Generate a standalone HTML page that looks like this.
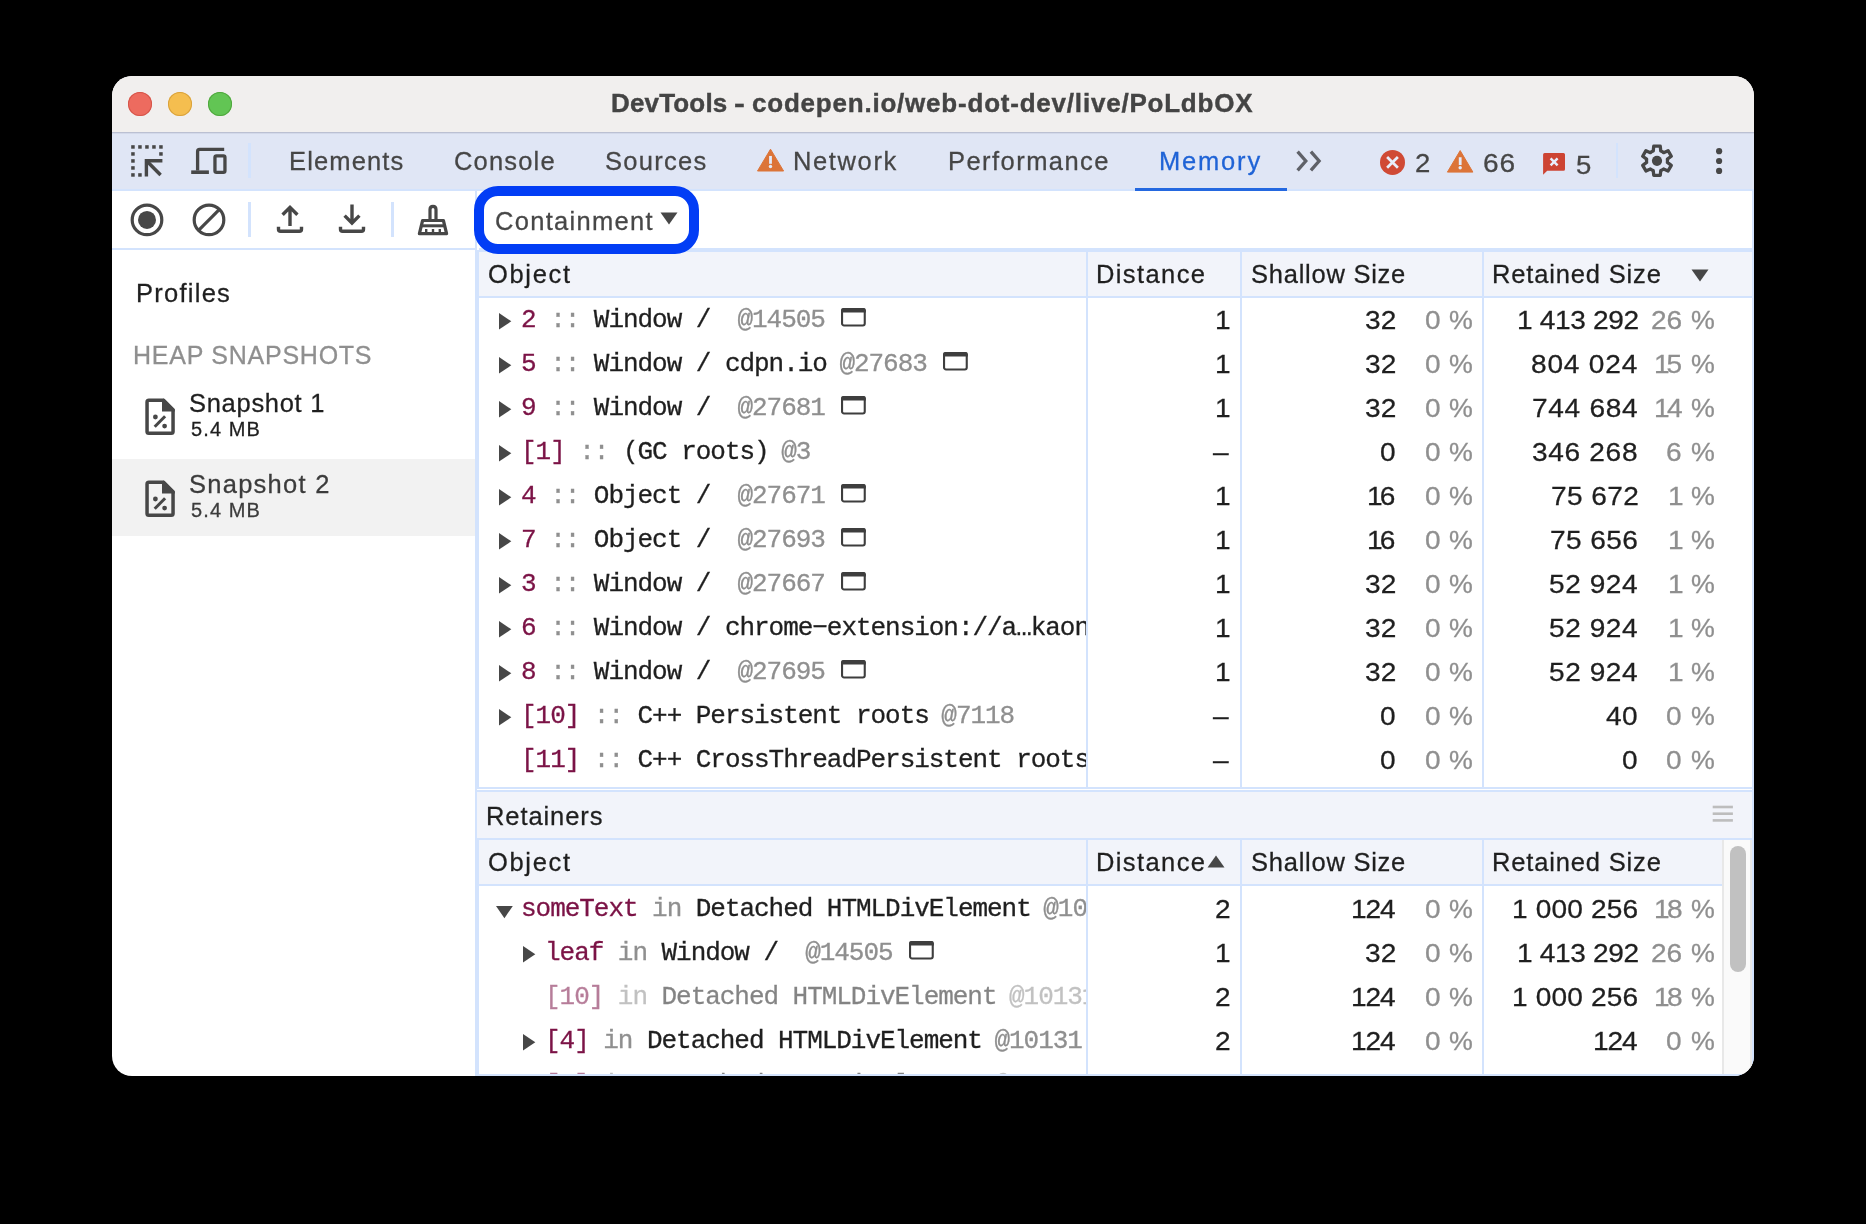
<!DOCTYPE html>
<html><head><meta charset="utf-8"><title>DevTools</title>
<style>
html,body{margin:0;padding:0;background:#000;}
body{width:1866px;height:1224px;position:relative;overflow:hidden;font-family:"Liberation Sans", sans-serif;}
#win{position:absolute;left:0;top:0;width:1866px;height:1224px;clip-path:inset(76px 112px 148px 112px round 20px);background:#fff;}
.r{position:absolute;}
.i{position:absolute;overflow:visible;}
.t{position:absolute;white-space:pre;line-height:1;display:block;will-change:transform;}
.s{font-family:"Liberation Sans", sans-serif;-webkit-text-stroke:0.28px;}
.m{font-family:"Liberation Mono", monospace;}
.clip{position:absolute;overflow:hidden;}
</style></head>
<body><div id="win">
<div class="r" style="left:112px;top:76px;width:1642px;height:56px;background:#f1efee;"></div>
<div class="r" style="left:112px;top:132px;width:1642px;height:1px;background:#bbc0d2;"></div>
<div class="r" style="left:112px;top:133px;width:1642px;height:1px;background:#d3d9ea;"></div>
<div class="r" style="left:128px;top:92px;width:24px;height:24px;border-radius:50%;background:#ed6b5f;box-shadow:inset 0 0 0 1px #d5554a;"></div>
<div class="r" style="left:168px;top:92px;width:24px;height:24px;border-radius:50%;background:#f5be4f;box-shadow:inset 0 0 0 1px #d9a23c;"></div>
<div class="r" style="left:208px;top:92px;width:24px;height:24px;border-radius:50%;background:#62c554;box-shadow:inset 0 0 0 1px #50a73e;"></div>
<span class="t s" style="top:90px;font-size:26px;color:#444;font-weight:700;letter-spacing:0.166px;left:610.60px;-webkit-text-stroke:0.4px;">DevTools</span>
<span class="t s" style="top:90px;font-size:26px;color:#444;font-weight:700;left:734.45px;-webkit-text-stroke:0.4px;transform:scaleX(1.25);transform-origin:0 0;">-</span>
<span class="t s" style="top:90px;font-size:26px;color:#444;font-weight:700;letter-spacing:0.786px;left:751.60px;-webkit-text-stroke:0.4px;">codepen.io/web-dot-dev/live/PoLdbOX</span>
<div class="r" style="left:112px;top:134px;width:1642px;height:55px;background:#e0e6f5;"></div>
<div class="r" style="left:112px;top:189px;width:1642px;height:2px;background:#d3e3fd;"></div>
<div class="r" style="left:248.4px;top:143px;width:2.5999999999999943px;height:35px;background:#d3e3fd;"></div>
<div class="r" style="left:1615.6px;top:143px;width:2.6000000000001364px;height:35px;background:#d3e3fd;"></div>
<span class="t s" style="top:149px;font-size:25.5px;color:#464646;letter-spacing:1.136px;left:288.70px;">Elements</span>
<span class="t s" style="top:149px;font-size:25.5px;color:#464646;letter-spacing:1.171px;left:454.20px;">Console</span>
<span class="t s" style="top:149px;font-size:25.5px;color:#464646;letter-spacing:1.267px;left:605.40px;">Sources</span>
<span class="t s" style="top:149px;font-size:25.5px;color:#464646;letter-spacing:1.622px;left:792.90px;">Network</span>
<span class="t s" style="top:149px;font-size:25.5px;color:#464646;letter-spacing:1.45px;left:948.00px;">Performance</span>
<span class="t s" style="top:149px;font-size:25.5px;color:#1f63d6;letter-spacing:1.812px;left:1158.80px;">Memory</span>
<div class="r" style="left:1135px;top:188px;width:152px;height:3px;background:#2468e0;"></div>
<span class="t s" style="top:151px;font-size:25.5px;color:#464646;left:1415.12px;transform:scaleX(1.08);transform-origin:0 0;">2</span>
<span class="t s" style="top:151px;font-size:25.5px;color:#464646;letter-spacing:0.909px;left:1482.60px;transform:scaleX(1.1);transform-origin:0 0;">66</span>
<span class="t s" style="top:153px;font-size:25.5px;color:#464646;left:1575.72px;transform:scaleX(1.08);transform-origin:0 0;">5</span>
<div class="r" style="left:112px;top:191px;width:1642px;height:57px;background:#fff;"></div>
<div class="r" style="left:112px;top:248px;width:363px;height:2px;background:#d3e3fd;"></div>
<div class="r" style="left:248.4px;top:202px;width:2.5999999999999943px;height:35px;background:#d3e3fd;"></div>
<div class="r" style="left:391.2px;top:202px;width:2.6000000000000227px;height:35px;background:#d3e3fd;"></div>
<div class="r" style="left:475px;top:191px;width:2px;height:59px;background:#d3e3fd;"></div>
<div class="r" style="left:475px;top:250px;width:4px;height:826px;background:#d3e3fd;"></div>
<span class="t s" style="top:281px;font-size:25.5px;color:#1f1f1f;letter-spacing:1.26px;left:135.50px;">Profiles</span>
<span class="t s" style="top:343px;font-size:25px;color:#8f8f8f;letter-spacing:0.75px;left:132.70px;">HEAP SNAPSHOTS</span>
<div class="r" style="left:112px;top:459px;width:363px;height:77px;background:#f2f2f2;"></div>
<span class="t s" style="top:391px;font-size:25.5px;color:#1f1f1f;letter-spacing:0.707px;left:189.30px;">Snapshot 1</span>
<span class="t s" style="top:419px;font-size:20px;color:#1f1f1f;letter-spacing:1.116px;left:190.70px;">5.4 MB</span>
<span class="t s" style="top:472px;font-size:25.5px;color:#3c3c3c;letter-spacing:1.263px;left:189.30px;">Snapshot 2</span>
<span class="t s" style="top:500px;font-size:20px;color:#3c3c3c;letter-spacing:1.116px;left:190.70px;">5.4 MB</span>
<div class="r" style="left:479px;top:248px;width:1275px;height:4px;background:#d3e3fd;"></div>
<div class="r" style="left:479px;top:252px;width:1273px;height:44px;background:#f2f4fa;"></div>
<span class="t s" style="top:262px;font-size:25.5px;color:#1f1f1f;letter-spacing:1.657px;left:487.90px;">Object</span>
<span class="t s" style="top:262px;font-size:25.5px;color:#1f1f1f;letter-spacing:1.396px;left:1096.20px;">Distance</span>
<span class="t s" style="top:262px;font-size:25.5px;color:#1f1f1f;letter-spacing:0.754px;left:1251.40px;">Shallow Size</span>
<span class="t s" style="top:262px;font-size:25.5px;color:#1f1f1f;letter-spacing:0.843px;left:1492.30px;">Retained Size</span>
<div class="r" style="left:479px;top:296px;width:1275px;height:2px;background:#d3e3fd;"></div>
<svg class="i" style="left:1691px;top:269px;" width="18" height="13" viewBox="0 0 18 13"><path d="M0.5 0.5H17.5L9 12.5Z" fill="#474747"/></svg>
<svg class="i" style="left:498.8px;top:313.4px;" width="13" height="17" viewBox="0 0 13 17"><path d="M0 0L12.3 8.3L0 16.6Z" fill="#474747"/></svg>
<div class="clip" style="left:479px;top:298px;width:607px;height:44px;"><span class="t m" style="left:42.30px;top:9px;font-size:26px;letter-spacing:-1.04px;-webkit-text-stroke:0.3px;"><span style="color:#7b1346">2</span><span style="color:#8f8f8f"> :: </span><span style="color:#1f1f1f">Window /  </span><span style="color:#8f8f8f;margin-left:-2px">@14505</span></span></div>
<svg class="i" style="left:841.3199999999999px;top:308.1px;" width="25" height="19" viewBox="0 0 25 19"><rect x="1.05" y="1.05" width="22.7" height="16.4" rx="2" fill="none" stroke="#3e3e3e" stroke-width="2.1"/><path d="M0 4.5V2.2Q0 0 2.2 0H22.6Q24.8 0 24.8 2.2V4.5Z" fill="#3e3e3e"/></svg>
<span class="t s" style="top:308px;font-size:25.5px;color:#1f1f1f;left:1215.20px;transform:scaleX(1.1);transform-origin:0 0;">1</span>
<span class="t s" style="top:308px;font-size:25.5px;color:#1f1f1f;letter-spacing:0.091px;left:1365.00px;transform:scaleX(1.1);transform-origin:0 0;">32</span>
<span class="t s" style="top:308px;font-size:25.5px;color:#8f8f8f;left:1449.40px;transform:scaleX(1.05);transform-origin:0 0;">%</span>
<span class="t s" style="top:308px;font-size:25.5px;color:#8f8f8f;left:1424.90px;transform:scaleX(1.1);transform-origin:0 0;">0</span>
<span class="t s" style="top:308px;font-size:25.5px;color:#1f1f1f;letter-spacing:-0.294px;left:1516.60px;transform:scaleX(1.1);transform-origin:0 0;">1 413 292</span>
<span class="t s" style="top:308px;font-size:25.5px;color:#8f8f8f;left:1690.90px;transform:scaleX(1.05);transform-origin:0 0;">%</span>
<span class="t s" style="top:308px;font-size:25.5px;color:#8f8f8f;left:1650.80px;transform:scaleX(1.1);transform-origin:0 0;">26</span>
<svg class="i" style="left:498.8px;top:357.4px;" width="13" height="17" viewBox="0 0 13 17"><path d="M0 0L12.3 8.3L0 16.6Z" fill="#474747"/></svg>
<div class="clip" style="left:479px;top:342px;width:607px;height:44px;"><span class="t m" style="left:42.30px;top:9px;font-size:26px;letter-spacing:-1.04px;-webkit-text-stroke:0.3px;"><span style="color:#7b1346">5</span><span style="color:#8f8f8f"> :: </span><span style="color:#1f1f1f">Window / cdpn.io </span><span style="color:#8f8f8f;margin-left:-2px">@27683</span></span></div>
<svg class="i" style="left:943.24px;top:352.1px;" width="25" height="19" viewBox="0 0 25 19"><rect x="1.05" y="1.05" width="22.7" height="16.4" rx="2" fill="none" stroke="#3e3e3e" stroke-width="2.1"/><path d="M0 4.5V2.2Q0 0 2.2 0H22.6Q24.8 0 24.8 2.2V4.5Z" fill="#3e3e3e"/></svg>
<span class="t s" style="top:352px;font-size:25.5px;color:#1f1f1f;left:1215.20px;transform:scaleX(1.1);transform-origin:0 0;">1</span>
<span class="t s" style="top:352px;font-size:25.5px;color:#1f1f1f;letter-spacing:0.091px;left:1365.00px;transform:scaleX(1.1);transform-origin:0 0;">32</span>
<span class="t s" style="top:352px;font-size:25.5px;color:#8f8f8f;left:1449.40px;transform:scaleX(1.05);transform-origin:0 0;">%</span>
<span class="t s" style="top:352px;font-size:25.5px;color:#8f8f8f;left:1424.90px;transform:scaleX(1.1);transform-origin:0 0;">0</span>
<span class="t s" style="top:352px;font-size:25.5px;color:#1f1f1f;letter-spacing:0.743px;left:1531.40px;transform:scaleX(1.1);transform-origin:0 0;">804 024</span>
<span class="t s" style="top:352px;font-size:25.5px;color:#8f8f8f;left:1690.90px;transform:scaleX(1.05);transform-origin:0 0;">%</span>
<span class="t s" style="top:352px;font-size:25.5px;color:#8f8f8f;letter-spacing:-2.818px;left:1653.90px;transform:scaleX(1.1);transform-origin:0 0;">15</span>
<svg class="i" style="left:498.8px;top:401.4px;" width="13" height="17" viewBox="0 0 13 17"><path d="M0 0L12.3 8.3L0 16.6Z" fill="#474747"/></svg>
<div class="clip" style="left:479px;top:386px;width:607px;height:44px;"><span class="t m" style="left:42.30px;top:9px;font-size:26px;letter-spacing:-1.04px;-webkit-text-stroke:0.3px;"><span style="color:#7b1346">9</span><span style="color:#8f8f8f"> :: </span><span style="color:#1f1f1f">Window /  </span><span style="color:#8f8f8f;margin-left:-2px">@27681</span></span></div>
<svg class="i" style="left:841.3199999999999px;top:396.1px;" width="25" height="19" viewBox="0 0 25 19"><rect x="1.05" y="1.05" width="22.7" height="16.4" rx="2" fill="none" stroke="#3e3e3e" stroke-width="2.1"/><path d="M0 4.5V2.2Q0 0 2.2 0H22.6Q24.8 0 24.8 2.2V4.5Z" fill="#3e3e3e"/></svg>
<span class="t s" style="top:396px;font-size:25.5px;color:#1f1f1f;left:1215.20px;transform:scaleX(1.1);transform-origin:0 0;">1</span>
<span class="t s" style="top:396px;font-size:25.5px;color:#1f1f1f;letter-spacing:0.091px;left:1365.00px;transform:scaleX(1.1);transform-origin:0 0;">32</span>
<span class="t s" style="top:396px;font-size:25.5px;color:#8f8f8f;left:1449.40px;transform:scaleX(1.05);transform-origin:0 0;">%</span>
<span class="t s" style="top:396px;font-size:25.5px;color:#8f8f8f;left:1424.90px;transform:scaleX(1.1);transform-origin:0 0;">0</span>
<span class="t s" style="top:396px;font-size:25.5px;color:#1f1f1f;letter-spacing:0.637px;left:1532.10px;transform:scaleX(1.1);transform-origin:0 0;">744 684</span>
<span class="t s" style="top:396px;font-size:25.5px;color:#8f8f8f;left:1690.90px;transform:scaleX(1.05);transform-origin:0 0;">%</span>
<span class="t s" style="top:396px;font-size:25.5px;color:#8f8f8f;letter-spacing:-2.455px;left:1653.50px;transform:scaleX(1.1);transform-origin:0 0;">14</span>
<svg class="i" style="left:498.8px;top:445.4px;" width="13" height="17" viewBox="0 0 13 17"><path d="M0 0L12.3 8.3L0 16.6Z" fill="#474747"/></svg>
<div class="clip" style="left:479px;top:430px;width:607px;height:44px;"><span class="t m" style="left:42.30px;top:9px;font-size:26px;letter-spacing:-1.04px;-webkit-text-stroke:0.3px;"><span style="color:#7b1346">[1]</span><span style="color:#8f8f8f"> :: </span><span style="color:#1f1f1f">(GC roots) </span><span style="color:#8f8f8f;margin-left:-2px">@3</span></span></div>
<span class="t s" style="top:440px;font-size:25.5px;color:#1f1f1f;left:1213.00px;transform:scaleX(1.1);transform-origin:0 0;">–</span>
<span class="t s" style="top:440px;font-size:25.5px;color:#1f1f1f;left:1379.60px;transform:scaleX(1.1);transform-origin:0 0;">0</span>
<span class="t s" style="top:440px;font-size:25.5px;color:#8f8f8f;left:1449.40px;transform:scaleX(1.05);transform-origin:0 0;">%</span>
<span class="t s" style="top:440px;font-size:25.5px;color:#8f8f8f;left:1424.90px;transform:scaleX(1.1);transform-origin:0 0;">0</span>
<span class="t s" style="top:440px;font-size:25.5px;color:#1f1f1f;letter-spacing:0.622px;left:1532.20px;transform:scaleX(1.1);transform-origin:0 0;">346 268</span>
<span class="t s" style="top:440px;font-size:25.5px;color:#8f8f8f;left:1690.90px;transform:scaleX(1.05);transform-origin:0 0;">%</span>
<span class="t s" style="top:440px;font-size:25.5px;color:#8f8f8f;left:1666.40px;transform:scaleX(1.1);transform-origin:0 0;">6</span>
<svg class="i" style="left:498.8px;top:489.4px;" width="13" height="17" viewBox="0 0 13 17"><path d="M0 0L12.3 8.3L0 16.6Z" fill="#474747"/></svg>
<div class="clip" style="left:479px;top:474px;width:607px;height:44px;"><span class="t m" style="left:42.30px;top:9px;font-size:26px;letter-spacing:-1.04px;-webkit-text-stroke:0.3px;"><span style="color:#7b1346">4</span><span style="color:#8f8f8f"> :: </span><span style="color:#1f1f1f">Object /  </span><span style="color:#8f8f8f;margin-left:-2px">@27671</span></span></div>
<svg class="i" style="left:841.3199999999999px;top:484.1px;" width="25" height="19" viewBox="0 0 25 19"><rect x="1.05" y="1.05" width="22.7" height="16.4" rx="2" fill="none" stroke="#3e3e3e" stroke-width="2.1"/><path d="M0 4.5V2.2Q0 0 2.2 0H22.6Q24.8 0 24.8 2.2V4.5Z" fill="#3e3e3e"/></svg>
<span class="t s" style="top:484px;font-size:25.5px;color:#1f1f1f;left:1215.20px;transform:scaleX(1.1);transform-origin:0 0;">1</span>
<span class="t s" style="top:484px;font-size:25.5px;color:#1f1f1f;letter-spacing:-2.636px;left:1366.90px;transform:scaleX(1.1);transform-origin:0 0;">16</span>
<span class="t s" style="top:484px;font-size:25.5px;color:#8f8f8f;left:1449.40px;transform:scaleX(1.05);transform-origin:0 0;">%</span>
<span class="t s" style="top:484px;font-size:25.5px;color:#8f8f8f;left:1424.90px;transform:scaleX(1.1);transform-origin:0 0;">0</span>
<span class="t s" style="top:484px;font-size:25.5px;color:#1f1f1f;letter-spacing:0.383px;left:1550.90px;transform:scaleX(1.1);transform-origin:0 0;">75 672</span>
<span class="t s" style="top:484px;font-size:25.5px;color:#8f8f8f;left:1690.90px;transform:scaleX(1.05);transform-origin:0 0;">%</span>
<span class="t s" style="top:484px;font-size:25.5px;color:#8f8f8f;left:1667.50px;transform:scaleX(1.1);transform-origin:0 0;">1</span>
<svg class="i" style="left:498.8px;top:533.4px;" width="13" height="17" viewBox="0 0 13 17"><path d="M0 0L12.3 8.3L0 16.6Z" fill="#474747"/></svg>
<div class="clip" style="left:479px;top:518px;width:607px;height:44px;"><span class="t m" style="left:42.30px;top:9px;font-size:26px;letter-spacing:-1.04px;-webkit-text-stroke:0.3px;"><span style="color:#7b1346">7</span><span style="color:#8f8f8f"> :: </span><span style="color:#1f1f1f">Object /  </span><span style="color:#8f8f8f;margin-left:-2px">@27693</span></span></div>
<svg class="i" style="left:841.3199999999999px;top:528.1px;" width="25" height="19" viewBox="0 0 25 19"><rect x="1.05" y="1.05" width="22.7" height="16.4" rx="2" fill="none" stroke="#3e3e3e" stroke-width="2.1"/><path d="M0 4.5V2.2Q0 0 2.2 0H22.6Q24.8 0 24.8 2.2V4.5Z" fill="#3e3e3e"/></svg>
<span class="t s" style="top:528px;font-size:25.5px;color:#1f1f1f;left:1215.20px;transform:scaleX(1.1);transform-origin:0 0;">1</span>
<span class="t s" style="top:528px;font-size:25.5px;color:#1f1f1f;letter-spacing:-2.636px;left:1366.90px;transform:scaleX(1.1);transform-origin:0 0;">16</span>
<span class="t s" style="top:528px;font-size:25.5px;color:#8f8f8f;left:1449.40px;transform:scaleX(1.05);transform-origin:0 0;">%</span>
<span class="t s" style="top:528px;font-size:25.5px;color:#8f8f8f;left:1424.90px;transform:scaleX(1.1);transform-origin:0 0;">0</span>
<span class="t s" style="top:528px;font-size:25.5px;color:#1f1f1f;letter-spacing:0.383px;left:1549.80px;transform:scaleX(1.1);transform-origin:0 0;">75 656</span>
<span class="t s" style="top:528px;font-size:25.5px;color:#8f8f8f;left:1690.90px;transform:scaleX(1.05);transform-origin:0 0;">%</span>
<span class="t s" style="top:528px;font-size:25.5px;color:#8f8f8f;left:1667.50px;transform:scaleX(1.1);transform-origin:0 0;">1</span>
<svg class="i" style="left:498.8px;top:577.4px;" width="13" height="17" viewBox="0 0 13 17"><path d="M0 0L12.3 8.3L0 16.6Z" fill="#474747"/></svg>
<div class="clip" style="left:479px;top:562px;width:607px;height:44px;"><span class="t m" style="left:42.30px;top:9px;font-size:26px;letter-spacing:-1.04px;-webkit-text-stroke:0.3px;"><span style="color:#7b1346">3</span><span style="color:#8f8f8f"> :: </span><span style="color:#1f1f1f">Window /  </span><span style="color:#8f8f8f;margin-left:-2px">@27667</span></span></div>
<svg class="i" style="left:841.3199999999999px;top:572.1px;" width="25" height="19" viewBox="0 0 25 19"><rect x="1.05" y="1.05" width="22.7" height="16.4" rx="2" fill="none" stroke="#3e3e3e" stroke-width="2.1"/><path d="M0 4.5V2.2Q0 0 2.2 0H22.6Q24.8 0 24.8 2.2V4.5Z" fill="#3e3e3e"/></svg>
<span class="t s" style="top:572px;font-size:25.5px;color:#1f1f1f;left:1215.20px;transform:scaleX(1.1);transform-origin:0 0;">1</span>
<span class="t s" style="top:572px;font-size:25.5px;color:#1f1f1f;letter-spacing:0.091px;left:1365.00px;transform:scaleX(1.1);transform-origin:0 0;">32</span>
<span class="t s" style="top:572px;font-size:25.5px;color:#8f8f8f;left:1449.40px;transform:scaleX(1.05);transform-origin:0 0;">%</span>
<span class="t s" style="top:572px;font-size:25.5px;color:#8f8f8f;left:1424.90px;transform:scaleX(1.1);transform-origin:0 0;">0</span>
<span class="t s" style="top:572px;font-size:25.5px;color:#1f1f1f;letter-spacing:0.51px;left:1549.10px;transform:scaleX(1.1);transform-origin:0 0;">52 924</span>
<span class="t s" style="top:572px;font-size:25.5px;color:#8f8f8f;left:1690.90px;transform:scaleX(1.05);transform-origin:0 0;">%</span>
<span class="t s" style="top:572px;font-size:25.5px;color:#8f8f8f;left:1667.50px;transform:scaleX(1.1);transform-origin:0 0;">1</span>
<svg class="i" style="left:498.8px;top:621.4px;" width="13" height="17" viewBox="0 0 13 17"><path d="M0 0L12.3 8.3L0 16.6Z" fill="#474747"/></svg>
<div class="clip" style="left:479px;top:606px;width:607px;height:44px;"><span class="t m" style="left:42.30px;top:9px;font-size:26px;letter-spacing:-1.04px;-webkit-text-stroke:0.3px;"><span style="color:#7b1346">6</span><span style="color:#8f8f8f"> :: </span><span style="color:#1f1f1f">Window / chrome−extension://a…kaon </span><span style="color:#8f8f8f;margin-left:-2px">@27669</span></span></div>
<span class="t s" style="top:616px;font-size:25.5px;color:#1f1f1f;left:1215.20px;transform:scaleX(1.1);transform-origin:0 0;">1</span>
<span class="t s" style="top:616px;font-size:25.5px;color:#1f1f1f;letter-spacing:0.091px;left:1365.00px;transform:scaleX(1.1);transform-origin:0 0;">32</span>
<span class="t s" style="top:616px;font-size:25.5px;color:#8f8f8f;left:1449.40px;transform:scaleX(1.05);transform-origin:0 0;">%</span>
<span class="t s" style="top:616px;font-size:25.5px;color:#8f8f8f;left:1424.90px;transform:scaleX(1.1);transform-origin:0 0;">0</span>
<span class="t s" style="top:616px;font-size:25.5px;color:#1f1f1f;letter-spacing:0.51px;left:1549.10px;transform:scaleX(1.1);transform-origin:0 0;">52 924</span>
<span class="t s" style="top:616px;font-size:25.5px;color:#8f8f8f;left:1690.90px;transform:scaleX(1.05);transform-origin:0 0;">%</span>
<span class="t s" style="top:616px;font-size:25.5px;color:#8f8f8f;left:1667.50px;transform:scaleX(1.1);transform-origin:0 0;">1</span>
<svg class="i" style="left:498.8px;top:665.4px;" width="13" height="17" viewBox="0 0 13 17"><path d="M0 0L12.3 8.3L0 16.6Z" fill="#474747"/></svg>
<div class="clip" style="left:479px;top:650px;width:607px;height:44px;"><span class="t m" style="left:42.30px;top:9px;font-size:26px;letter-spacing:-1.04px;-webkit-text-stroke:0.3px;"><span style="color:#7b1346">8</span><span style="color:#8f8f8f"> :: </span><span style="color:#1f1f1f">Window /  </span><span style="color:#8f8f8f;margin-left:-2px">@27695</span></span></div>
<svg class="i" style="left:841.3199999999999px;top:660.1px;" width="25" height="19" viewBox="0 0 25 19"><rect x="1.05" y="1.05" width="22.7" height="16.4" rx="2" fill="none" stroke="#3e3e3e" stroke-width="2.1"/><path d="M0 4.5V2.2Q0 0 2.2 0H22.6Q24.8 0 24.8 2.2V4.5Z" fill="#3e3e3e"/></svg>
<span class="t s" style="top:660px;font-size:25.5px;color:#1f1f1f;left:1215.20px;transform:scaleX(1.1);transform-origin:0 0;">1</span>
<span class="t s" style="top:660px;font-size:25.5px;color:#1f1f1f;letter-spacing:0.091px;left:1365.00px;transform:scaleX(1.1);transform-origin:0 0;">32</span>
<span class="t s" style="top:660px;font-size:25.5px;color:#8f8f8f;left:1449.40px;transform:scaleX(1.05);transform-origin:0 0;">%</span>
<span class="t s" style="top:660px;font-size:25.5px;color:#8f8f8f;left:1424.90px;transform:scaleX(1.1);transform-origin:0 0;">0</span>
<span class="t s" style="top:660px;font-size:25.5px;color:#1f1f1f;letter-spacing:0.51px;left:1549.10px;transform:scaleX(1.1);transform-origin:0 0;">52 924</span>
<span class="t s" style="top:660px;font-size:25.5px;color:#8f8f8f;left:1690.90px;transform:scaleX(1.05);transform-origin:0 0;">%</span>
<span class="t s" style="top:660px;font-size:25.5px;color:#8f8f8f;left:1667.50px;transform:scaleX(1.1);transform-origin:0 0;">1</span>
<svg class="i" style="left:498.8px;top:709.4px;" width="13" height="17" viewBox="0 0 13 17"><path d="M0 0L12.3 8.3L0 16.6Z" fill="#474747"/></svg>
<div class="clip" style="left:479px;top:694px;width:607px;height:44px;"><span class="t m" style="left:42.30px;top:9px;font-size:26px;letter-spacing:-1.04px;-webkit-text-stroke:0.3px;"><span style="color:#7b1346">[10]</span><span style="color:#8f8f8f"> :: </span><span style="color:#1f1f1f">C++ Persistent roots </span><span style="color:#8f8f8f;margin-left:-2px">@7118</span></span></div>
<span class="t s" style="top:704px;font-size:25.5px;color:#1f1f1f;left:1213.00px;transform:scaleX(1.1);transform-origin:0 0;">–</span>
<span class="t s" style="top:704px;font-size:25.5px;color:#1f1f1f;left:1379.60px;transform:scaleX(1.1);transform-origin:0 0;">0</span>
<span class="t s" style="top:704px;font-size:25.5px;color:#8f8f8f;left:1449.40px;transform:scaleX(1.05);transform-origin:0 0;">%</span>
<span class="t s" style="top:704px;font-size:25.5px;color:#8f8f8f;left:1424.90px;transform:scaleX(1.1);transform-origin:0 0;">0</span>
<span class="t s" style="top:704px;font-size:25.5px;color:#1f1f1f;letter-spacing:0.454px;left:1606.00px;transform:scaleX(1.1);transform-origin:0 0;">40</span>
<span class="t s" style="top:704px;font-size:25.5px;color:#8f8f8f;left:1690.90px;transform:scaleX(1.05);transform-origin:0 0;">%</span>
<span class="t s" style="top:704px;font-size:25.5px;color:#8f8f8f;left:1666.40px;transform:scaleX(1.1);transform-origin:0 0;">0</span>
<div class="clip" style="left:479px;top:738px;width:607px;height:44px;"><span class="t m" style="left:42.30px;top:9px;font-size:26px;letter-spacing:-1.04px;-webkit-text-stroke:0.3px;"><span style="color:#7b1346">[11]</span><span style="color:#8f8f8f"> :: </span><span style="color:#1f1f1f">C++ CrossThreadPersistent roots </span><span style="color:#8f8f8f;margin-left:-2px">@7120</span></span></div>
<span class="t s" style="top:748px;font-size:25.5px;color:#1f1f1f;left:1213.00px;transform:scaleX(1.1);transform-origin:0 0;">–</span>
<span class="t s" style="top:748px;font-size:25.5px;color:#1f1f1f;left:1379.60px;transform:scaleX(1.1);transform-origin:0 0;">0</span>
<span class="t s" style="top:748px;font-size:25.5px;color:#8f8f8f;left:1449.40px;transform:scaleX(1.05);transform-origin:0 0;">%</span>
<span class="t s" style="top:748px;font-size:25.5px;color:#8f8f8f;left:1424.90px;transform:scaleX(1.1);transform-origin:0 0;">0</span>
<span class="t s" style="top:748px;font-size:25.5px;color:#1f1f1f;left:1622.10px;transform:scaleX(1.1);transform-origin:0 0;">0</span>
<span class="t s" style="top:748px;font-size:25.5px;color:#8f8f8f;left:1690.90px;transform:scaleX(1.05);transform-origin:0 0;">%</span>
<span class="t s" style="top:748px;font-size:25.5px;color:#8f8f8f;left:1666.40px;transform:scaleX(1.1);transform-origin:0 0;">0</span>
<div class="r" style="left:477px;top:787px;width:1277px;height:2px;background:#d3e3fd;"></div>
<div class="r" style="left:477px;top:789px;width:1277px;height:1px;background:#fff;"></div>
<div class="r" style="left:477px;top:790px;width:1277px;height:2px;background:#d3e3fd;"></div>
<div class="r" style="left:477px;top:792px;width:1275px;height:46px;background:#f2f4fa;"></div>
<span class="t s" style="top:804px;font-size:25.5px;color:#1f1f1f;letter-spacing:0.914px;left:485.70px;">Retainers</span>
<div class="r" style="left:477px;top:838px;width:1277px;height:2px;background:#d3e3fd;"></div>
<div class="r" style="left:479px;top:840px;width:1244px;height:44px;background:#f2f4fa;"></div>
<span class="t s" style="top:850px;font-size:25.5px;color:#1f1f1f;letter-spacing:1.657px;left:487.90px;">Object</span>
<span class="t s" style="top:850px;font-size:25.5px;color:#1f1f1f;letter-spacing:1.396px;left:1096.20px;">Distance</span>
<span class="t s" style="top:850px;font-size:25.5px;color:#1f1f1f;letter-spacing:0.754px;left:1251.40px;">Shallow Size</span>
<span class="t s" style="top:850px;font-size:25.5px;color:#1f1f1f;letter-spacing:0.843px;left:1492.30px;">Retained Size</span>
<div class="r" style="left:479px;top:884px;width:1244px;height:2px;background:#d3e3fd;"></div>
<svg class="i" style="left:1207px;top:854.5px;" width="18" height="13" viewBox="0 0 18 13"><path d="M0.5 12.5H17.5L9 0.5Z" fill="#474747"/></svg>
<svg class="i" style="left:495.6px;top:905.7px;" width="17" height="13" viewBox="0 0 17 13"><path d="M0 0H16.8L8.4 12.3Z" fill="#474747"/></svg>
<div class="clip" style="left:479px;top:887px;width:607px;height:44px;"><span class="t m" style="left:42.30px;top:9px;font-size:26px;letter-spacing:-1.04px;-webkit-text-stroke:0.3px;"><span style="color:#7b1346">someText</span><span style="color:#8f8f8f"> in </span><span style="color:#1f1f1f">Detached HTMLDivElement </span><span style="color:#8f8f8f;margin-left:-2px">@10131</span></span></div>
<span class="t s" style="top:897px;font-size:25.5px;color:#1f1f1f;left:1215.20px;transform:scaleX(1.1);transform-origin:0 0;">2</span>
<span class="t s" style="top:897px;font-size:25.5px;color:#1f1f1f;letter-spacing:-1.046px;left:1350.70px;transform:scaleX(1.1);transform-origin:0 0;">124</span>
<span class="t s" style="top:897px;font-size:25.5px;color:#8f8f8f;left:1449.40px;transform:scaleX(1.05);transform-origin:0 0;">%</span>
<span class="t s" style="top:897px;font-size:25.5px;color:#8f8f8f;left:1424.90px;transform:scaleX(1.1);transform-origin:0 0;">0</span>
<span class="t s" style="top:897px;font-size:25.5px;color:#1f1f1f;letter-spacing:0.149px;left:1511.60px;transform:scaleX(1.1);transform-origin:0 0;">1 000 256</span>
<span class="t s" style="top:897px;font-size:25.5px;color:#8f8f8f;left:1690.90px;transform:scaleX(1.05);transform-origin:0 0;">%</span>
<span class="t s" style="top:897px;font-size:25.5px;color:#8f8f8f;letter-spacing:-2.455px;left:1653.50px;transform:scaleX(1.1);transform-origin:0 0;">18</span>
<svg class="i" style="left:522.8px;top:946.4px;" width="13" height="17" viewBox="0 0 13 17"><path d="M0 0L12.3 8.3L0 16.6Z" fill="#474747"/></svg>
<div class="clip" style="left:479px;top:931px;width:607px;height:44px;"><span class="t m" style="left:66.30px;top:9px;font-size:26px;letter-spacing:-1.04px;-webkit-text-stroke:0.3px;"><span style="color:#7b1346">leaf</span><span style="color:#8f8f8f"> in </span><span style="color:#1f1f1f">Window /  </span><span style="color:#8f8f8f;margin-left:-2px">@14505</span></span></div>
<svg class="i" style="left:909.0px;top:941.1px;" width="25" height="19" viewBox="0 0 25 19"><rect x="1.05" y="1.05" width="22.7" height="16.4" rx="2" fill="none" stroke="#3e3e3e" stroke-width="2.1"/><path d="M0 4.5V2.2Q0 0 2.2 0H22.6Q24.8 0 24.8 2.2V4.5Z" fill="#3e3e3e"/></svg>
<span class="t s" style="top:941px;font-size:25.5px;color:#1f1f1f;left:1215.20px;transform:scaleX(1.1);transform-origin:0 0;">1</span>
<span class="t s" style="top:941px;font-size:25.5px;color:#1f1f1f;letter-spacing:0.091px;left:1365.00px;transform:scaleX(1.1);transform-origin:0 0;">32</span>
<span class="t s" style="top:941px;font-size:25.5px;color:#8f8f8f;left:1449.40px;transform:scaleX(1.05);transform-origin:0 0;">%</span>
<span class="t s" style="top:941px;font-size:25.5px;color:#8f8f8f;left:1424.90px;transform:scaleX(1.1);transform-origin:0 0;">0</span>
<span class="t s" style="top:941px;font-size:25.5px;color:#1f1f1f;letter-spacing:-0.294px;left:1516.60px;transform:scaleX(1.1);transform-origin:0 0;">1 413 292</span>
<span class="t s" style="top:941px;font-size:25.5px;color:#8f8f8f;left:1690.90px;transform:scaleX(1.05);transform-origin:0 0;">%</span>
<span class="t s" style="top:941px;font-size:25.5px;color:#8f8f8f;left:1650.80px;transform:scaleX(1.1);transform-origin:0 0;">26</span>
<div class="clip" style="left:479px;top:975px;width:607px;height:44px;"><span class="t m" style="left:66.30px;top:9px;font-size:26px;letter-spacing:-1.04px;-webkit-text-stroke:0.3px;opacity:0.55;"><span style="color:#7b1346">[10]</span><span style="color:#8f8f8f"> in </span><span style="color:#1f1f1f">Detached HTMLDivElement </span><span style="color:#8f8f8f;margin-left:-2px">@10131</span></span></div>
<span class="t s" style="top:985px;font-size:25.5px;color:#1f1f1f;left:1215.20px;transform:scaleX(1.1);transform-origin:0 0;">2</span>
<span class="t s" style="top:985px;font-size:25.5px;color:#1f1f1f;letter-spacing:-1.046px;left:1350.70px;transform:scaleX(1.1);transform-origin:0 0;">124</span>
<span class="t s" style="top:985px;font-size:25.5px;color:#8f8f8f;left:1449.40px;transform:scaleX(1.05);transform-origin:0 0;">%</span>
<span class="t s" style="top:985px;font-size:25.5px;color:#8f8f8f;left:1424.90px;transform:scaleX(1.1);transform-origin:0 0;">0</span>
<span class="t s" style="top:985px;font-size:25.5px;color:#1f1f1f;letter-spacing:0.149px;left:1511.60px;transform:scaleX(1.1);transform-origin:0 0;">1 000 256</span>
<span class="t s" style="top:985px;font-size:25.5px;color:#8f8f8f;left:1690.90px;transform:scaleX(1.05);transform-origin:0 0;">%</span>
<span class="t s" style="top:985px;font-size:25.5px;color:#8f8f8f;letter-spacing:-2.455px;left:1653.50px;transform:scaleX(1.1);transform-origin:0 0;">18</span>
<svg class="i" style="left:522.8px;top:1034.4px;" width="13" height="17" viewBox="0 0 13 17"><path d="M0 0L12.3 8.3L0 16.6Z" fill="#474747"/></svg>
<div class="clip" style="left:479px;top:1019px;width:607px;height:44px;"><span class="t m" style="left:66.30px;top:9px;font-size:26px;letter-spacing:-1.04px;-webkit-text-stroke:0.3px;"><span style="color:#7b1346">[4]</span><span style="color:#8f8f8f"> in </span><span style="color:#1f1f1f">Detached HTMLDivElement </span><span style="color:#8f8f8f;margin-left:-2px">@10131</span></span></div>
<span class="t s" style="top:1029px;font-size:25.5px;color:#1f1f1f;left:1215.20px;transform:scaleX(1.1);transform-origin:0 0;">2</span>
<span class="t s" style="top:1029px;font-size:25.5px;color:#1f1f1f;letter-spacing:-1.046px;left:1350.70px;transform:scaleX(1.1);transform-origin:0 0;">124</span>
<span class="t s" style="top:1029px;font-size:25.5px;color:#8f8f8f;left:1449.40px;transform:scaleX(1.05);transform-origin:0 0;">%</span>
<span class="t s" style="top:1029px;font-size:25.5px;color:#8f8f8f;left:1424.90px;transform:scaleX(1.1);transform-origin:0 0;">0</span>
<span class="t s" style="top:1029px;font-size:25.5px;color:#1f1f1f;letter-spacing:-1.046px;left:1593.20px;transform:scaleX(1.1);transform-origin:0 0;">124</span>
<span class="t s" style="top:1029px;font-size:25.5px;color:#8f8f8f;left:1690.90px;transform:scaleX(1.05);transform-origin:0 0;">%</span>
<span class="t s" style="top:1029px;font-size:25.5px;color:#8f8f8f;left:1666.40px;transform:scaleX(1.1);transform-origin:0 0;">0</span>
<div class="clip" style="left:479px;top:1063px;width:607px;height:44px;"><span class="t m" style="left:66.30px;top:9px;font-size:26px;letter-spacing:-1.04px;-webkit-text-stroke:0.3px;opacity:0.55;"><span style="color:#7b1346">[4]</span><span style="color:#8f8f8f"> in </span><span style="color:#1f1f1f">Detached HTMLDivElement </span><span style="color:#8f8f8f;margin-left:-2px">@10131</span></span></div>
<div class="r" style="left:1086px;top:252px;width:2px;height:535px;background:#d3e3fd;"></div>
<div class="r" style="left:1086px;top:840px;width:2px;height:236px;background:#d3e3fd;"></div>
<div class="r" style="left:1240px;top:252px;width:2px;height:535px;background:#d3e3fd;"></div>
<div class="r" style="left:1240px;top:840px;width:2px;height:236px;background:#d3e3fd;"></div>
<div class="r" style="left:1482px;top:252px;width:2px;height:535px;background:#d3e3fd;"></div>
<div class="r" style="left:1482px;top:840px;width:2px;height:236px;background:#d3e3fd;"></div>
<div class="r" style="left:1752px;top:191px;width:2px;height:885px;background:#d3e3fd;"></div>
<div class="r" style="left:479px;top:1074px;width:1275px;height:2px;background:#d3e3fd;"></div>
<div class="r" style="left:1722px;top:840px;width:30px;height:234px;background:#fafafa;"></div>
<div class="r" style="left:1722.4px;top:840px;width:1.3999999999998636px;height:234px;background:#e8e8e8;"></div>
<div class="r" style="left:1750.3px;top:840px;width:1.7000000000000455px;height:234px;background:#e8e8e8;"></div>
<div class="r" style="left:1730px;top:846px;width:16px;height:126px;border-radius:8px;background:#c1c1c1;"></div>
<svg class="i" style="left:0;top:0" width="1866" height="1224" viewBox="0 0 1866 1224"><rect x="131.2" y="145.2" width="3.5" height="3.5" fill="#474747"/><rect x="138.2" y="145.2" width="3.5" height="3.5" fill="#474747"/><rect x="145.2" y="145.2" width="3.5" height="3.5" fill="#474747"/><rect x="152.2" y="145.2" width="3.5" height="3.5" fill="#474747"/><rect x="159.2" y="145.2" width="3.5" height="3.5" fill="#474747"/><rect x="131.2" y="152.2" width="3.5" height="3.5" fill="#474747"/><rect x="131.2" y="159.2" width="3.5" height="3.5" fill="#474747"/><rect x="131.2" y="166.2" width="3.5" height="3.5" fill="#474747"/><rect x="131.2" y="173.2" width="3.5" height="3.5" fill="#474747"/><rect x="159.2" y="152.2" width="3.5" height="3.5" fill="#474747"/><rect x="138.2" y="173.2" width="3.5" height="3.5" fill="#474747"/><path d="M146.4 176.4V160.7H162.4" fill="none" stroke="#474747" stroke-width="3.4"/><path d="M147 161.3L160.6 174.9" fill="none" stroke="#474747" stroke-width="3.5"/><path d="M224.2 149.4H199.6Q197.6 149.4 197.6 151.4V170.6" fill="none" stroke="#474747" stroke-width="3.3"/><rect x="191.2" y="170.4" width="17.7" height="3.6" fill="#474747"/><rect x="214.95" y="155.95" width="10" height="16.4" rx="1.6" fill="none" stroke="#474747" stroke-width="3.3"/><path d="M770.5 149.2L783.6 171.0H757.5Z" fill="#dc7438" stroke="#dc7438" stroke-width="1" stroke-linejoin="round"/><rect x="769.1" y="155.96" width="2.8" height="7.85" fill="#e3ecfb"/><circle cx="770.5" cy="166.53" r="1.7" fill="#e3ecfb"/><path d="M1460.2 150.6L1472.9 172.1H1447.4Z" fill="#dc7438" stroke="#dc7438" stroke-width="1" stroke-linejoin="round"/><rect x="1458.8" y="157.26" width="2.8" height="7.74" fill="#e3ecfb"/><circle cx="1460.2" cy="167.69" r="1.7" fill="#e3ecfb"/><path d="M1297.6 151.6L1305.8 161L1297.6 170.4" fill="none" stroke="#5f6168" stroke-width="3.3"/><path d="M1310.8999999999999 151.6L1319.1 161L1310.8999999999999 170.4" fill="none" stroke="#5f6168" stroke-width="3.3"/><circle cx="1392.5" cy="162.4" r="12.5" fill="#d04a35"/><path d="M1387.1 157L1397.9 167.8M1397.9 157L1387.1 167.8" stroke="#e8eefb" stroke-width="2.7" fill="none"/><path d="M1544.6 152.9H1563.5Q1565 152.9 1565 154.4V169.2Q1565 170.7 1563.5 170.7H1547.2L1543.1 174.7V154.4Q1543.1 152.9 1544.6 152.9Z" fill="#cd4433"/><path d="M1550.6 158.4L1557.6 165.4M1557.6 158.4L1550.6 165.4" stroke="#e8eefb" stroke-width="2.5" fill="none"/><path d="M1660.76 151.00L1660.25 146.16L1653.75 146.16L1653.24 151.00A10.5 10.5 0 0 0 1650.39 152.64L1645.94 150.67L1642.69 156.29L1646.63 159.16A10.5 10.5 0 0 0 1646.63 162.44L1642.69 165.31L1645.94 170.93L1650.39 168.96A10.5 10.5 0 0 0 1653.24 170.60L1653.75 175.44L1660.25 175.44L1660.76 170.60A10.5 10.5 0 0 0 1663.61 168.96L1668.06 170.93L1671.31 165.31L1667.37 162.44A10.5 10.5 0 0 0 1667.37 159.16L1671.31 156.29L1668.06 150.67L1663.61 152.64A10.5 10.5 0 0 0 1660.76 151.00Z" fill="none" stroke="#474747" stroke-width="3.3" stroke-linejoin="round"/><circle cx="1657" cy="160.8" r="5.1" fill="#474747"/><circle cx="1719.1" cy="151.2" r="3.1" fill="#474747"/><circle cx="1719.1" cy="161" r="3.1" fill="#474747"/><circle cx="1719.1" cy="170.9" r="3.1" fill="#474747"/><circle cx="147" cy="219.9" r="14.8" fill="none" stroke="#474747" stroke-width="3.2"/><circle cx="147" cy="219.9" r="9" fill="#474747"/><circle cx="209" cy="219.9" r="14.8" fill="none" stroke="#474747" stroke-width="3.2"/><path d="M198.8 230.1L219.2 209.7" stroke="#474747" stroke-width="3.2" fill="none"/><path d="M278.5 226.8V229.2Q278.5 231.3 280.6 231.3H299.4Q301.5 231.3 301.5 229.2V226.8" fill="none" stroke="#474747" stroke-width="3.4"/><path d="M290 226V206.6M282.6 214.7L290 207.3L297.4 214.7" fill="none" stroke="#474747" stroke-width="3.4"/><path d="M340.5 226.8V229.2Q340.5 231.3 342.6 231.3H361.4Q363.5 231.3 363.5 229.2V226.8" fill="none" stroke="#474747" stroke-width="3.4"/><path d="M352 204.4V223M344.6 215.6L352 223L359.4 215.6" fill="none" stroke="#474747" stroke-width="3.4"/><path d="M430 219V209.5Q430 206.4 433 206.4Q436 206.4 436 209.5V219" fill="none" stroke="#474747" stroke-width="3.2"/><path d="M422.6 220.5H443.4L446.6 233.7H419.4Z" fill="none" stroke="#474747" stroke-width="3.2" stroke-linejoin="round"/><path d="M421.5 225.8H444.5" stroke="#474747" stroke-width="3" fill="none"/><rect x="425.0" y="229" width="2.4" height="4" fill="#474747"/><rect x="431.8" y="229" width="2.4" height="4" fill="#474747"/><rect x="438.6" y="229" width="2.4" height="4" fill="#474747"/><path d="M148.55 400.35H163.5L173.05 409.8V431.45Q173.05 433.25 171.25 433.25H148.85000000000002Q147.05 433.25 147.05 431.45V402.15000000000003Q147.05 400.35 148.85000000000002 400.35Z" fill="none" stroke="#474747" stroke-width="3.5" stroke-linejoin="round"/><path d="M162.0 399.6L163.9 398.6L174.8 409.40000000000003V411.40000000000003H162.0Z" fill="#474747"/><circle cx="155.4" cy="417.0" r="2.4" fill="#474747"/><circle cx="164.60000000000002" cy="426.1" r="2.4" fill="#474747"/><path d="M154.70000000000002 426.8L165.10000000000002 416.20000000000005" stroke="#474747" stroke-width="3" fill="none"/><path d="M148.55 482.35H163.5L173.05 491.8V513.45Q173.05 515.25 171.25 515.25H148.85000000000002Q147.05 515.25 147.05 513.45V484.15000000000003Q147.05 482.35 148.85000000000002 482.35Z" fill="none" stroke="#474747" stroke-width="3.5" stroke-linejoin="round"/><path d="M162.0 481.6L163.9 480.6L174.8 491.40000000000003V493.40000000000003H162.0Z" fill="#474747"/><circle cx="155.4" cy="499.0" r="2.4" fill="#474747"/><circle cx="164.60000000000002" cy="508.1" r="2.4" fill="#474747"/><path d="M154.70000000000002 508.8L165.10000000000002 498.20000000000005" stroke="#474747" stroke-width="3" fill="none"/><rect x="1712.7" y="805.7" width="20.2" height="2.6" fill="#bdbdbd"/><rect x="1712.7" y="812.4" width="20.2" height="2.6" fill="#bdbdbd"/><rect x="1712.7" y="819.1" width="20.2" height="2.6" fill="#bdbdbd"/></svg>
<div class="r" style="left:474px;top:186px;width:205px;height:48px;border:10px solid #023df5;border-radius:24px;background:#fff;"></div>
<span class="t s" style="top:209px;font-size:25.5px;color:#474747;letter-spacing:1.29px;left:494.90px;">Containment</span>
<svg class="i" style="left:660px;top:212px;" width="18" height="13" viewBox="0 0 18 13"><path d="M0.5 0.5H17.5L9 12.5Z" fill="#474747"/></svg>
</div></body></html>
